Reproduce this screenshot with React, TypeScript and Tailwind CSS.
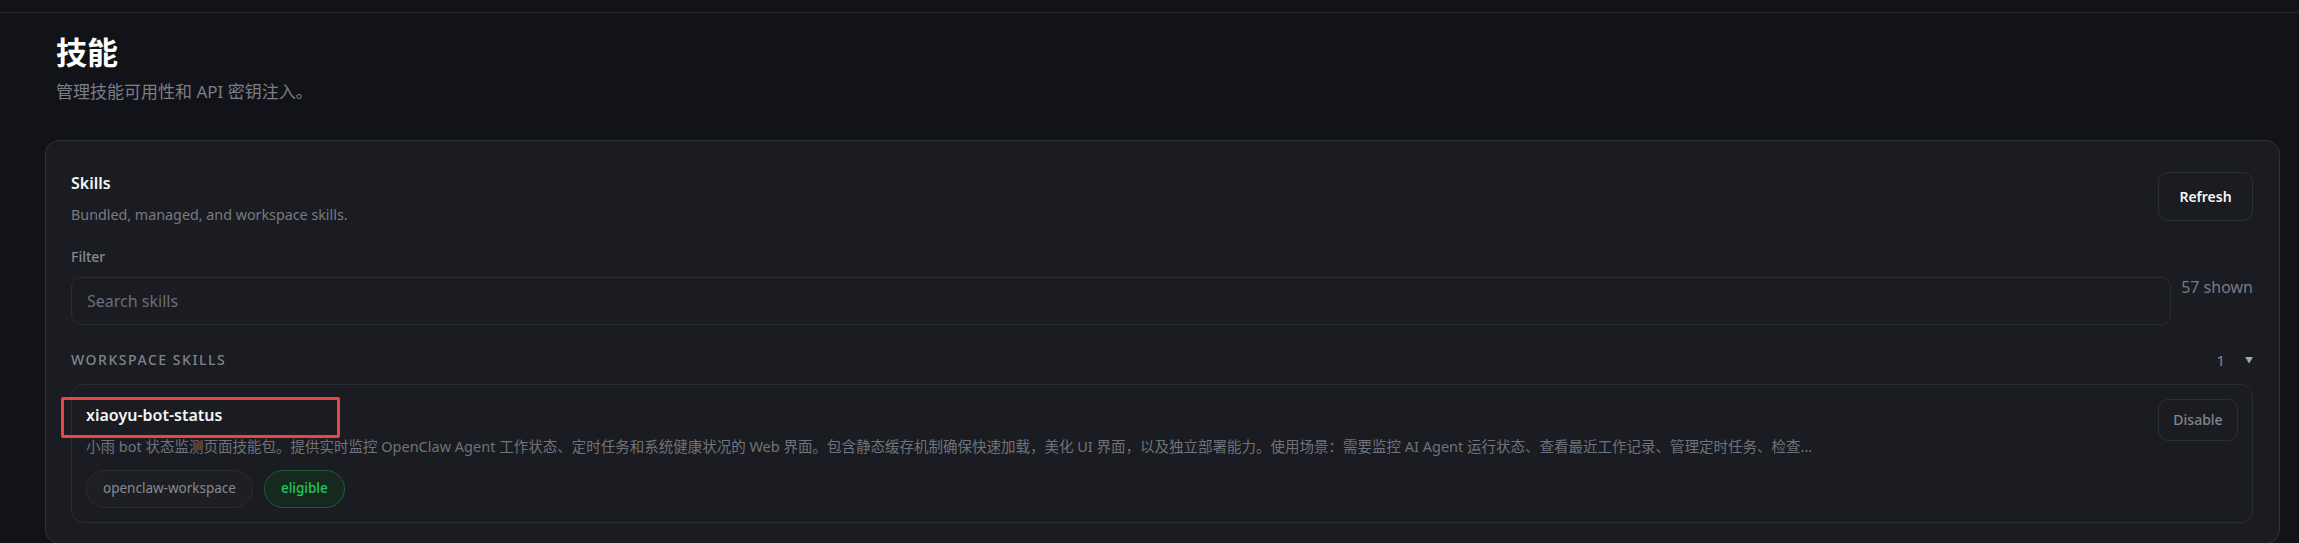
import React from "react";

const skill = {
  name: "xiaoyu-bot-status",
  description:
    "小雨 bot 状态监测页面技能包。提供实时监控 OpenClaw Agent 工作状态、定时任务和系统健康状况的 Web 界面。包含静态缓存机制确保快速加载，美化 UI 界面，以及独立部署能力。使用场景：需要监控 AI Agent 运行状态、查看最近工作记录、管理定时任务、检查...",
  source: "openclaw-workspace",
  eligible: true,
};

const SkillItem = () => (
  <div className="relative flex justify-between rounded-[12px] border border-[#2a2d33] bg-[#1a1c22] p-[14px]">
    <div className="mt-[3px] flex flex-col">
      <div className="text-[16px] font-semibold leading-[26px] text-[#f4f5f7]">
        {skill.name}
      </div>
      <div className="mt-[8px] text-[14.5px] leading-[20px] text-[#6f737b]">
        {skill.description}
      </div>
      <div className="mt-[14px] flex gap-[11px]">
        <span className="flex h-[38px] items-center rounded-full border border-[#2a2d33] bg-[#1d1f25] px-[16px] text-[13.5px] text-[#868a93]">
          {skill.source}
        </span>
        {skill.eligible && (
          <span className="flex h-[38px] items-center rounded-full border border-[#1f5a35] bg-[#16291f] px-[16px] text-[13.5px] font-medium text-[#22c55e]">
            eligible
          </span>
        )}
      </div>
    </div>
    <button className="h-[42px] w-[80px] rounded-[10px] border border-[#2c2f36] bg-[#1a1c22] text-[14px] font-medium text-[#80848c]">
      Disable
    </button>
    {/* highlight annotation */}
    <div className="pointer-events-none absolute left-[-11px] top-[12px] h-[41px] w-[279px] rounded-[2px] border-[3px] border-[#ef4444]" />
  </div>
);

export default function App() {
  return (
    <div className="min-h-screen bg-[#121318] font-['Noto_Sans','Noto_Sans_CJK_SC',sans-serif]">
      <div className="h-[13px] border-b border-[#2a2c31] bg-[#121318]" />
      <div className="pl-[45px] pr-[19px]">
        <div className="pl-[11px] pt-[21px]">
          <h1 className="text-[31px] font-bold leading-[36px] text-white">技能</h1>
          <p className="mt-[10px] text-[17px] leading-[24px] text-[#7b7f87]">
            管理技能可用性和 API 密钥注入。
          </p>
        </div>

        <section className="mt-[36px] rounded-[14px] border border-[#2f3238] bg-[#1a1c22] pl-[25px] pr-[26px] pt-[30px] pb-[20px]">
          <div className="flex items-start justify-between">
            <div>
              <div className="text-[16px] font-semibold leading-[24px] text-[#f4f5f7]">Skills</div>
              <div className="mt-[10px] text-[14.3px] leading-[20px] text-[#777b83]">
                Bundled, managed, and workspace skills.
              </div>
            </div>
            <button className="mt-[1px] h-[49px] w-[95px] rounded-[10px] border border-[#2c2f36] bg-[#1a1c22] text-[14px] font-semibold text-[#f4f5f7]">
              Refresh
            </button>
          </div>

          <div className="mt-[22px] text-[14px] font-medium leading-[20px] text-[#868a93]">Filter</div>
          <div className="mt-[10px] flex items-start gap-[10px]">
            <input
              placeholder="Search skills"
              className="h-[48px] flex-1 rounded-[10px] border border-[#2a2d33] bg-[#1a1c22] px-[15px] text-[16px] text-[#d4d6da] outline-none placeholder:text-[#6b6f77]"
            />
            <span className="text-[16px] leading-[20px] text-[#777b83]">57 shown</span>
          </div>

          <div className="mt-[24px] flex items-center justify-between">
            <div className="text-[14px] font-medium uppercase leading-[20px] tracking-[0.11em] text-[#80848c]">
              Workspace skills
            </div>
            <div className="flex items-center gap-[20px] text-[15px] text-[#868a93]">
              <span>1</span>
              <span className="text-[8px] text-[#a3a7ae]">▼</span>
            </div>
          </div>

          <div className="mt-[12px]">
            <SkillItem />
          </div>
        </section>
      </div>
    </div>
  );
}
